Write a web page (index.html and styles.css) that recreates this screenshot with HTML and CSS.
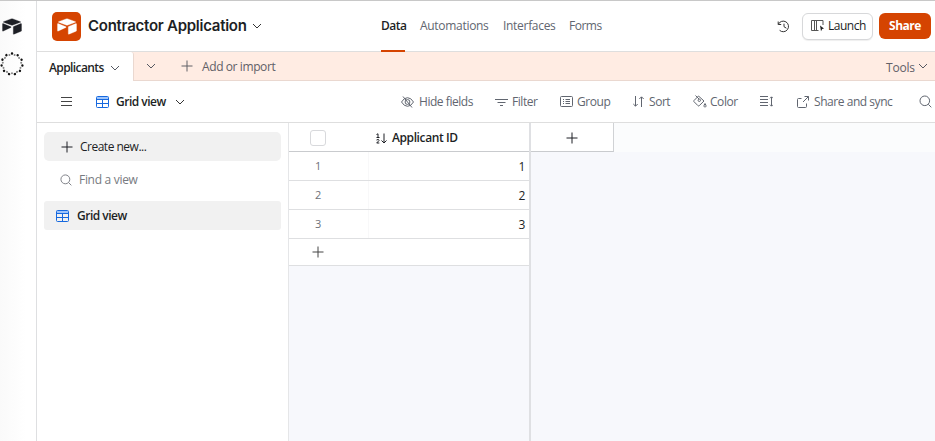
FILE: index.html
```html
<!DOCTYPE html>
<html lang="en">
<head>
<meta charset="utf-8">
<title>Contractor Application</title>
<link rel="stylesheet" href="styles.css">
</head>
<body>
<svg class="defs" aria-hidden="true">
  <symbol id="chevron" viewBox="0 0 10 6"><path d="M1 1l4 4 4-4"/></symbol>
  <symbol id="plus" viewBox="0 0 12 12"><path d="M6 .5v11M.5 6h11"/></symbol>
  <symbol id="search" viewBox="0 0 13 13"><circle cx="5.8" cy="5.8" r="4.8"/><path d="M9.300 9.300l3 3"/></symbol>
  <symbol id="grid" viewBox="0 0 13 12"><path class="band" d="M1 2h11"/><rect x=".5" y=".5" width="12" height="11" rx="1"/><path d="M.5 3.500h12M.5 7.500h12M6.500 3.500v8"/></symbol>
  <symbol id="box" viewBox="0 0 20 17"><path d="M1.500 3.700 9 .9q1-.4 2 0l7.500 2.800q.5.300 0 .6L11 7q-1 .4-2 0L1.500 4.300q-.5-.3 0-.6zM11.300 9q0-.4.4-.6l7.200-2.800q.6-.2.6.4v6.700q0 .4-.4.600l-7.200 2.900q-.6.200-.6-.4zM.5 6q0-.7.6-.4l7.900 3.200q.6.300 0 .6L1.400 13q-.9.400-.9-.3z"/></symbol>
</svg>
<div class="app">
  <aside class="rail">
    <svg class="brand" width="20" height="17"><use href="#box"/></svg>
    <svg class="dots" width="24" height="24" viewBox="0 0 24 24"><circle class="outer" cx="12" cy="12" r="10.500" pathLength="110" transform="rotate(-90 12 12)"/><circle class="inner" cx="12" cy="12" r="9.300" pathLength="110" transform="rotate(-90 12 12)"/></svg>
  </aside>
  <div class="main">
    <header class="header">
      <div class="logo"><svg width="20" height="17"><use href="#box"/></svg></div>
      <h1>Contractor Application</h1>
      <svg class="chev dark" width="10" height="6"><use href="#chevron"/></svg>
      <nav class="nav">
        <a class="active data">Data</a><a class="auto">Automations</a><a class="inter">Interfaces</a><a class="forms">Forms</a>
      </nav>
      <svg class="history" width="13" height="13" viewBox="0 0 13 13"><path d="M1.200 1.500v3h3M1.400 4.200A5.300 5.300 0 1 1 2.600 10.300M7 3.700v3l2.400 1.500"/></svg>
      <button class="launch"><svg width="14" height="12" viewBox="0 0 14 12"><path d="M7.500 10.500H.5V.5h11.500V5M3.500 .5v10M5.500 .5v10"/><path class="solid" d="M9 5.500l4 3-1.800.5-1.200 2.300z"/></svg><span>Launch</span></button>
      <button class="share">Share</button>
    </header>
    <div class="tabs">
      <div class="tab"><span>Applicants</span><svg class="chev" width="10" height="6"><use href="#chevron"/></svg></div>
      <svg class="chev all" width="10" height="6"><use href="#chevron"/></svg>
      <svg class="plus" width="12" height="12"><use href="#plus"/></svg>
      <span class="import">Add or import</span>
      <span class="tools">Tools</span><svg class="chev" width="10" height="6"><use href="#chevron"/></svg>
    </div>
    <div class="toolbar">
      <svg class="menu" width="11" height="9" viewBox="0 0 11 9"><path d="M0 .5h11M0 4.500h11M0 8.500h11"/></svg>
      <svg class="blue" width="13" height="12"><use href="#grid"/></svg>
      <span class="view">Grid view</span>
      <svg class="chev dark" width="10" height="6"><use href="#chevron"/></svg>
      <div class="tool hide"><svg width="13" height="12" viewBox="0 0 13 12"><path d="M.5 6Q3 1.700 6.500 1.700T12.500 6Q10 10.300 6.500 10.300T.5 6zM2 .5l9 11"/><circle cx="6.500" cy="6" r="2.400"/></svg><span>Hide fields</span></div>
      <div class="tool filter"><svg width="13" height="8" viewBox="0 0 13 8"><path d="M0 1.500h13M2.500 4.500h8M5 7.500h3"/></svg><span>Filter</span></div>
      <div class="tool group"><svg width="13" height="11" viewBox="0 0 13 11"><rect x=".5" y=".5" width="12" height="10" rx="1"/><path d="M3 3.500h1M5.500 3.500H10M3 5.500h1M5.500 5.500H10M3 7.500h1M5.500 7.500H10"/></svg><span>Group</span></div>
      <div class="tool sort"><svg width="11" height="11" viewBox="0 0 11 11"><path d="M2.500 0v10M.3 8l2.200 2.200L4.700 8M8.500 11V1M6.300 3l2.200-2.200L10.700 3"/></svg><span>Sort</span></div>
      <div class="tool color"><svg width="14" height="13" viewBox="0 0 14 13"><path d="M2.500.5l3.500 3.500M5.500 1L1 5.500q-.6.600 0 1.200l4 4q.6.600 1.200 0L11 6zM12 8.500q-1.300 2-1 2.800t1 .8 1-.8-1-2.800z"/><circle cx="6.300" cy="5.300" r="1.200"/></svg><span>Color</span></div>
      <svg class="height" width="13" height="11" viewBox="0 0 13 11"><path d="M0 .5h8M0 3.500h8M0 6.500h8M0 9.500h8M11.500 1v9M10 2.300L11.500.8 13 2.300M10 8.700l1.500 1.500L13 8.700"/></svg>
      <div class="tool sync"><svg width="12" height="12" viewBox="0 0 12 12"><path d="M4.500 2.500h-3q-1 0-1 1v7q0 1 1 1h7q1 0 1-1v-3M7.500.5h4v4M11.500.5L6 6"/></svg><span>Share and sync</span></div>
      <svg class="search" width="13" height="13"><use href="#search"/></svg>
    </div>
    <div class="content">
      <aside class="sidebar">
        <div class="create"><svg width="12" height="12"><use href="#plus"/></svg><span>Create new...</span></div>
        <div class="find"><svg width="12" height="12"><use href="#search"/></svg><span>Find a view</span></div>
        <div class="current"><svg class="blue" width="13" height="12"><use href="#grid"/></svg><span>Grid view</span></div>
      </aside>
      <section class="records">
        <div class="row head"><i class="check"></i><svg width="11" height="11" viewBox="0 0 11 11"><path d="M.5 1.500L2 .8v3.700M.5 4.500h3M.5 7Q3 5.500 3 7.500L.7 10h2.600M8 .5v9M5.500 7.500L8 10l2.500-2.500"/></svg><span>Applicant ID</span></div>
        <div class="row"><span class="num">1</span><span class="val">1</span></div>
        <div class="row"><span class="num">2</span><span class="val">2</span></div>
        <div class="row"><span class="num">3</span><span class="val">3</span></div>
        <div class="row add"><svg width="12" height="12"><use href="#plus"/></svg></div>
      </section>
      <section class="rest">
        <div class="resthead"><div class="addfield"><svg width="12" height="12"><use href="#plus"/></svg></div></div>
      </section>
    </div>
  </div>
</div>
</body>
</html>
```

FILE: styles.css
```css
* { box-sizing: border-box; }
body { margin: 0; font: 12px/16px "Open Sans", "Noto Sans", sans-serif; letter-spacing: -.3px; color: #1d1f25; background: #fff; }
.defs { position: absolute; width: 0; height: 0; }
svg { display: block; flex: none; fill: none; stroke: currentColor; stroke-width: 1; }
span, h1, a { white-space: nowrap; flex: none; }
.app { display: flex; width: 935px; height: 441px; overflow: hidden; border-top: 1px solid #c8c8c8; }
.rail { width: 37px; flex: none; border-right: 1px solid #dedfe1; background: linear-gradient(90deg, #fafafa, #fff 26px); }
.brand { margin: 17px 0 0 2px; fill: #1d1f25; stroke: #1d1f25; stroke-width: .3; }
.dots { margin-top: 17px; }
.outer { stroke: #111; stroke-width: 2.4; stroke-linecap: round; stroke-dasharray: .1 9.9; }
.inner { stroke: #888; stroke-width: 2; stroke-linecap: round; stroke-dasharray: .1 9.9; stroke-dashoffset: 5; }
.main { width: 898px; display: flex; flex-direction: column; }
.header { display: flex; align-items: center; height: 51px; border-bottom: 1px solid #dedede; }
.logo { display: grid; place-items: center; width: 29px; height: 29px; margin: 1px 7px 0 15px; border-radius: 5px; background: #d54401; color: #fff; }
.logo svg { fill: #fff; stroke: #fff; stroke-width: .3; }
h1 { width: 158px; margin: 0 6px 0 0; font: 600 15px/20px Inter, sans-serif; letter-spacing: -.26px; }
.chev { color: #555861; }
.chev.dark { color: #333; }
.nav { display: flex; margin-left: 119px; color: #616670; font-weight: 500; align-self: stretch; }
.nav a { height: 51px; padding-top: 17px; margin-right: 15px; }
.nav .active { color: #1d1f25; border-bottom: 2px solid #d54401; font-weight: 600; letter-spacing: -.5px; }
.data { width: 24px; }
.auto { width: 68px; }
.inter { width: 52px; }
.nav .forms { width: 33px; margin-left: -1px; letter-spacing: -.5px; }
.nav .inter { stroke: none; }
.history { margin-left: 160px; color: #333; }
button { display: flex; align-items: center; font: inherit; letter-spacing: inherit; padding: 0; white-space: nowrap; }
.launch { width: 71px; height: 27px; margin-left: 12px; padding-left: 8px; gap: 3px; border: 1px solid #d7d8da; border-radius: 6px; background: #fff; color: #1d1f25; font-weight: 500; letter-spacing: -.5px; box-shadow: 0 1px 1px #0001; }
.launch svg { color: #555; }
.launch .solid { fill: #222; stroke: none; }
.share { width: 52px; height: 26px; margin-left: 6px; justify-content: center; border: 0; border-radius: 6px; background: #d54401; color: #fff; font-weight: 700; letter-spacing: -.5px; }
.tabs { display: flex; align-items: center; height: 29px; padding-right: 7px; background: #ffece3; border-bottom: 1px solid #ead8d0; color: #616067; }
.tab { display: flex; align-items: center; width: 97px; height: 29px; padding: 3px 0 0 12px; background: #fff; border-right: 1px solid #ead8d0; border-radius: 0 3px 0 0; color: #1d1f25; font-weight: 600; letter-spacing: -.6px; }
.tab span { width: 61px; }
.all { margin: 0 25px 0 12px; }
.plus { margin-right: 9px; }
.import { margin: 2px auto 0 0; letter-spacing: -.4px; }
.tools { width: 28px; margin: 3px 4px 0 0; letter-spacing: -.2px; }
.toolbar { display: flex; align-items: center; height: 42px; border-bottom: 1px solid #dedede; color: #616670; }
.menu { margin: 0 24px; color: #444; }
.blue { color: #1769df; }
.band { stroke: #9fc5fb; stroke-width: 2; }
.view { width: 53px; margin: 0 6px 0 7px; color: #1d1f25; font-weight: 600; letter-spacing: -.5px; }
.tool { display: flex; align-items: center; gap: 5px; flex: none; letter-spacing: -.45px; }
.hide { width: 73px; margin-left: 216px; }
.filter { width: 43px; margin-left: 21px; gap: 4px; }
.group { width: 50px; margin-left: 22px; gap: 4px; }
.sort { width: 38px; margin-left: 23px; }
.color { width: 45px; margin-left: 22px; gap: 3px; }
.height { margin-left: 22px; }
.sync { width: 95px; margin-left: 24px; }
.toolbar .search { margin-left: 27px; }
.content { display: flex; flex: 1; }
.sidebar { width: 252px; flex: none; padding: 9px 7px; border-right: 1px solid #e5e6e8; }
.sidebar > div { display: flex; align-items: center; height: 29px; border-radius: 3px; }
.sidebar .create { padding-left: 17px; gap: 7px; border-radius: 5px; background: #f1f1f1; letter-spacing: -.5px; }
.sidebar .find { height: 37px; padding-left: 16px; gap: 7px; color: #777a80; }
.sidebar .current { margin-top: 3px; padding-left: 12px; gap: 8px; background: #f1f1f1; font-weight: 600; letter-spacing: -.5px; }
.records { width: 242px; flex: none; border-right: 2px solid #dfe0e3; background: #f7f8fc; }
.row { display: flex; align-items: center; height: 29px; border-bottom: 1px solid #dedfe1; background: #fff; }
.row.head { padding-top: 2px; border-color: #c9cbce; font-weight: 600; letter-spacing: -.4px; }
.check { width: 16px; height: 16px; margin: 0 50px 0 21px; border: 1px solid #d8d9dc; border-radius: 3px; }
.head span { margin-left: 5px; }
.num { width: 80px; height: 28px; padding: 6px 0 0 26px; border-right: 1px solid #f8f8f9; font-size: 11px; color: #6e7178; }
.val { margin-left: auto; padding: 1px 4px 0 0; }
.add { height: 27px; padding-left: 23px; color: #444; }
.rest { flex: 1; background: #f7f8fc; }
.resthead { height: 29px; background: #fbfcfd; }
.addfield { display: grid; place-items: center; width: 83px; height: 29px; padding: 2px 1px 0 0; border-right: 1px solid #d0d2d5; border-bottom: 1px solid #c9cbce; background: #fff; }
```
